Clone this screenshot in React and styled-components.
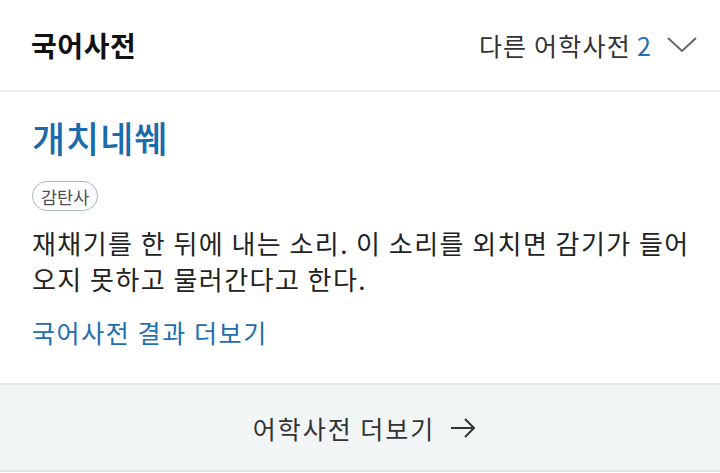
import React from "react";
import styled, { createGlobalStyle } from "styled-components";

const GlobalStyle = createGlobalStyle`
  html, body {
    margin: 0;
    padding: 0;
    background: #fff;
  }
  body {
    font-family: "Noto Sans CJK KR", "Noto Sans", sans-serif;
    color: #222;
  }
`;

const Wrapper = styled.div`
  width: 720px;
  background: #fff;
`;

const Header = styled.div`
  height: 90px;
  display: flex;
  align-items: center;
  justify-content: space-between;
  padding: 0 22px 0 31px;
  border-bottom: 2px solid #ececec;
`;

const HeaderTitle = styled.h2`
  margin: 0;
  font-size: 28px;
  font-weight: 700;
  color: #111;
  letter-spacing: 0.6px;
`;

const OtherDicts = styled.button`
  display: flex;
  align-items: center;
  gap: 14px;
  border: 0;
  background: none;
  padding: 0;
  font-family: inherit;
  font-size: 25px;
  letter-spacing: 1.2px;
  color: #333;
  cursor: pointer;
`;

const Count = styled.span`
  color: #1f6fb3;
  margin-left: 6px;
`;

const Entry = styled.div`
  padding: 19px 20px 34px 32px;
  border-bottom: 2px solid #e6e9eb;
`;

const Word = styled.h1`
  margin: 0;
  font-size: 36px;
  font-weight: 500;
  line-height: 52px;
  color: #1a6aae;
  letter-spacing: 1px;
`;

const Tags = styled.div`
  display: flex;
  margin-top: 18px;
`;

const Badge = styled.span`
  box-sizing: border-box;
  height: 30px;
  padding: 0 8px;
  display: flex;
  align-items: center;
  border: 1.5px solid #a9b6c6;
  border-radius: 15px;
  font-size: 17.5px;
  color: #4a4f57;
`;

const Definition = styled.p`
  margin: 14px 0 0;
  font-size: 26px;
  line-height: 36px;
  color: #222;
  letter-spacing: 1.45px;
`;

const MoreLink = styled.a`
  display: block;
  margin-top: 18px;
  font-size: 25px;
  line-height: 34px;
  letter-spacing: 1.6px;
  color: #1e6eb0;
  text-decoration: none;
`;

const Footer = styled.a`
  height: 85px;
  display: flex;
  align-items: center;
  justify-content: center;
  gap: 14px;
  padding-left: 10px;
  background: #f1f5f6;
  border-bottom: 2px solid #dfe3e5;
  font-size: 25px;
  letter-spacing: 2px;
  color: #333;
  text-decoration: none;
`;

const Chevron = () => (
  <svg width="32" height="20" viewBox="0 0 32 20" fill="none">
    <path d="M2 3 L16 16 L30 3" stroke="#666" strokeWidth="2" />
  </svg>
);

const Arrow = () => (
  <svg width="28" height="22" viewBox="0 0 28 22" fill="none">
    <path d="M2 11 H25 M16 2 L25 11 L16 20" stroke="#333" strokeWidth="2" />
  </svg>
);

export default function App() {
  return (
    <Wrapper>
      <GlobalStyle />
      <Header>
        <HeaderTitle>국어사전</HeaderTitle>
        <OtherDicts>
          <span>
            다른 어학사전<Count>2</Count>
          </span>
          <Chevron />
        </OtherDicts>
      </Header>
      <Entry>
        <Word>개치네쒜</Word>
        <Tags>
          <Badge>감탄사</Badge>
        </Tags>
        <Definition>
          재채기를 한 뒤에 내는 소리. 이 소리를 외치면 감기가 들어 오지
          못하고 물러간다고 한다.
        </Definition>
        <MoreLink href="#">국어사전 결과 더보기</MoreLink>
      </Entry>
      <Footer href="#">
        어학사전 더보기
        <Arrow />
      </Footer>
    </Wrapper>
  );
}
